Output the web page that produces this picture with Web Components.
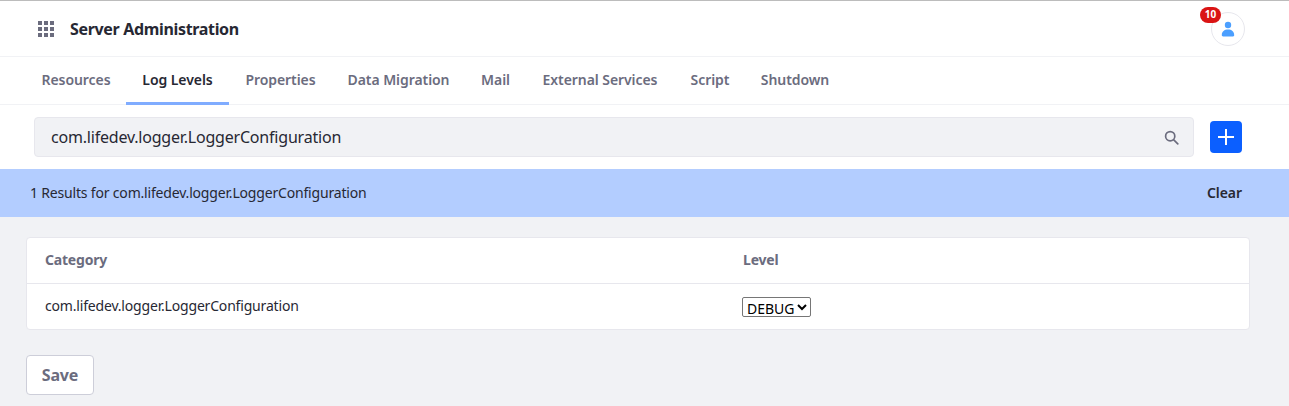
<!DOCTYPE html>
<html lang="en">
<head>
<meta charset="utf-8">
<title>Server Administration</title>
<style>
  html, body { margin: 0; height: 100%; }
  body { background: #f1f2f5; font-family: "Noto Sans", sans-serif; color: #272833; overflow: hidden; }
</style>
</head>
<body>
<admin-header titulo="Server Administration" contagem="10"></admin-header>
<admin-abas>
  <admin-aba largura="100">Resources</admin-aba>
  <admin-aba largura="103" ativa>Log Levels</admin-aba>
  <admin-aba largura="103">Properties</admin-aba>
  <admin-aba largura="133">Data Migration</admin-aba>
  <admin-aba largura="61">Mail</admin-aba>
  <admin-aba largura="148">External Services</admin-aba>
  <admin-aba largura="72">Script</admin-aba>
  <admin-aba largura="98">Shutdown</admin-aba>
</admin-abas>
<admin-busca valor="com.lifedev.logger.LoggerConfiguration"></admin-busca>
<admin-resultado>1 Results for com.lifedev.logger.LoggerConfiguration</admin-resultado>
<admin-tabela categoria="com.lifedev.logger.LoggerConfiguration"></admin-tabela>
<admin-salvar>Save</admin-salvar>

<script>
class AdminHeader extends HTMLElement {
  connectedCallback() {
    const quadrados = [];
    for (let l = 0; l < 3; l++) {
      for (let c = 0; c < 3; c++) {
        quadrados.push(`<rect x="${c * 6}" y="${l * 6}" width="4" height="4" />`);
      }
    }
    this.attachShadow({ mode: "open" }).innerHTML = `
      <style>
        :host {
          display: flex;
          align-items: center;
          box-sizing: border-box;
          height: 57px;
          padding: 0 44px 0 38px;
          background: #fff;
          border-top: 1px solid #bcbcbc;
          border-bottom: 1px solid #f1f2f5;
        }
        svg.grade { width: 16px; height: 16px; fill: #6b6c7e; margin-right: 16px; }
        h1 { margin: 0; flex: 1; font-size: 16px; font-weight: 700; color: #272833; letter-spacing: -0.33px; }
        .avatar {
          position: relative;
          box-sizing: border-box;
          width: 34px;
          height: 34px;
          border: 1px solid #e7e7ed;
          border-radius: 50%;
          display: flex;
          align-items: center;
          justify-content: center;
        }
        .avatar svg { width: 14px; height: 16px; fill: #4b9fff; }
        .selo {
          position: absolute;
          top: -6px;
          left: -12px;
          width: 21px;
          height: 16px;
          border-radius: 8px;
          background: #da1414;
          color: #fff;
          font-size: 10px;
          font-weight: 700;
          line-height: 15px;
          text-align: center;
        }
      </style>
      <svg class="grade" viewBox="0 0 16 16">${quadrados.join("")}</svg>
      <h1>${this.getAttribute("titulo")}</h1>
      <div class="avatar">
        <svg viewBox="0 0 14 16"><circle cx="7" cy="4" r="3.2" /><path d="M0.8 14.2C0.8 10.6 3.4 8.6 7 8.6s6.2 2 6.2 5.6c0 .8-.6 1.2-1.3 1.2H2.1c-.7 0-1.3-.4-1.3-1.2z" /></svg>
        <span class="selo">${this.getAttribute("contagem")}</span>
      </div>`;
  }
}

class AdminAbas extends HTMLElement {
  constructor() {
    super();
    this.attachShadow({ mode: "open" }).innerHTML = `
      <style>
        :host {
          display: flex;
          box-sizing: border-box;
          height: 48px;
          padding: 0 0 0 26px;
          background: #fff;
          border-bottom: 1px solid #f1f2f5;
        }
      </style>
      <slot></slot>`;
  }
}

class AdminAba extends HTMLElement {
  constructor() {
    super();
    this.attachShadow({ mode: "open" }).innerHTML = `
      <style>
        :host {
          display: block;
          flex: none;
          box-sizing: border-box;
          height: 48px;
          font-size: 14px;
          font-weight: 600;
          line-height: 45px;
          letter-spacing: -0.07px;
          text-align: center;
          white-space: nowrap;
          color: #6b6c7e;
          border-bottom: 3px solid transparent;
        }
        :host([ativa]) { color: #272833; border-bottom-color: #80acff; }
      </style>
      <slot></slot>`;
  }

  connectedCallback() {
    this.style.width = `${this.getAttribute("largura")}px`;
  }
}

class AdminBusca extends HTMLElement {
  connectedCallback() {
    this.attachShadow({ mode: "open" }).innerHTML = `
      <style>
        :host {
          display: flex;
          align-items: center;
          box-sizing: border-box;
          height: 64px;
          padding: 0 47px 0 34px;
          background: #fff;
        }
        .campo {
          flex: 1;
          display: flex;
          align-items: center;
          box-sizing: border-box;
          height: 40px;
          padding: 0 14px 0 16px;
          background: #f1f2f5;
          border: 1px solid #e7e7ed;
          border-radius: 4px;
          margin-right: 16px;
        }
        .texto { flex: 1; font-size: 16px; color: #272833; letter-spacing: -0.2px; }
        .campo svg { width: 15px; height: 15px; fill: none; stroke: #6b6c7e; stroke-width: 1.7; stroke-linecap: round; }
        button {
          width: 32px;
          height: 32px;
          padding: 0;
          border: 0;
          border-radius: 4px;
          background: #0b5fff;
          display: flex;
          align-items: center;
          justify-content: center;
        }
        button svg { width: 16px; height: 16px; stroke: #fff; stroke-width: 2; }
      </style>
      <div class="campo">
        <span class="texto">${this.getAttribute("valor")}</span>
        <svg viewBox="0 0 15 15"><circle cx="6.2" cy="6.2" r="4.6" /><path d="M9.8 9.8l4 4" /></svg>
      </div>
      <button aria-label="Add"><svg viewBox="0 0 16 16"><path d="M8 0v16M0 8h16" /></svg></button>`;
  }
}

class AdminResultado extends HTMLElement {
  constructor() {
    super();
    this.attachShadow({ mode: "open" }).innerHTML = `
      <style>
        :host {
          display: flex;
          align-items: center;
          justify-content: space-between;
          box-sizing: border-box;
          height: 48px;
          padding: 0 47px 2px 30px;
          background: #b3cdff;
          font-size: 14px;
          color: #272833;
        }
        .texto { letter-spacing: -0.18px; }
        b { font-weight: 600; letter-spacing: -0.05px; }
      </style>
      <span class="texto"><slot></slot></span>
      <b>Clear</b>`;
  }
}

class AdminTabela extends HTMLElement {
  connectedCallback() {
    this.attachShadow({ mode: "open" }).innerHTML = `
      <style>
        :host {
          display: block;
          box-sizing: border-box;
          margin: 20px 39px 0 26px;
          background: #fff;
          border: 1px solid #e7e7ed;
          border-radius: 4px;
          font-size: 14px;
          color: #272833;
        }
        .linha {
          display: grid;
          grid-template-columns: 697px 1fr;
          align-items: center;
          box-sizing: border-box;
          padding: 0 18px;
        }
        .cabecalho { height: 46px; padding-bottom: 3px; border-bottom: 1px solid #e7e7ed; color: #6b6c7e; font-weight: 700; letter-spacing: -0.2px; }
        .cabecalho span + span { padding-left: 1px; }
        .corpo { height: 45px; }
        .corpo span { letter-spacing: -0.18px; padding-bottom: 3px; }
        select {
          justify-self: start;
          font-family: "Noto Sans", sans-serif;
          font-size: 14px;
          width: 69px;
          height: 20px;
          color: #000;
          background: #fff;
          border: 1px solid #767676;
          border-radius: 2px;
          padding: 0 0 2px;
        }
      </style>
      <div class="linha cabecalho"><span>Category</span><span>Level</span></div>
      <div class="linha corpo">
        <span>${this.getAttribute("categoria")}</span>
        <select><option>DEBUG</option></select>
      </div>`;
  }
}

class AdminSalvar extends HTMLElement {
  constructor() {
    super();
    this.attachShadow({ mode: "open" }).innerHTML = `
      <style>
        :host { display: block; margin: 25px 0 0 26px; }
        button {
          box-sizing: border-box;
          width: 68px;
          height: 40px;
          padding: 0 0 1px;
          background: #fff;
          border: 1px solid #cdced9;
          border-radius: 4px;
          font-family: "Noto Sans", sans-serif;
          font-size: 16px;
          font-weight: 700;
          color: #6b6c7e;
          letter-spacing: -0.2px;
        }
      </style>
      <button><slot></slot></button>`;
  }
}

customElements.define("admin-header", AdminHeader);
customElements.define("admin-abas", AdminAbas);
customElements.define("admin-aba", AdminAba);
customElements.define("admin-busca", AdminBusca);
customElements.define("admin-resultado", AdminResultado);
customElements.define("admin-tabela", AdminTabela);
customElements.define("admin-salvar", AdminSalvar);
</script>
</body>
</html>
